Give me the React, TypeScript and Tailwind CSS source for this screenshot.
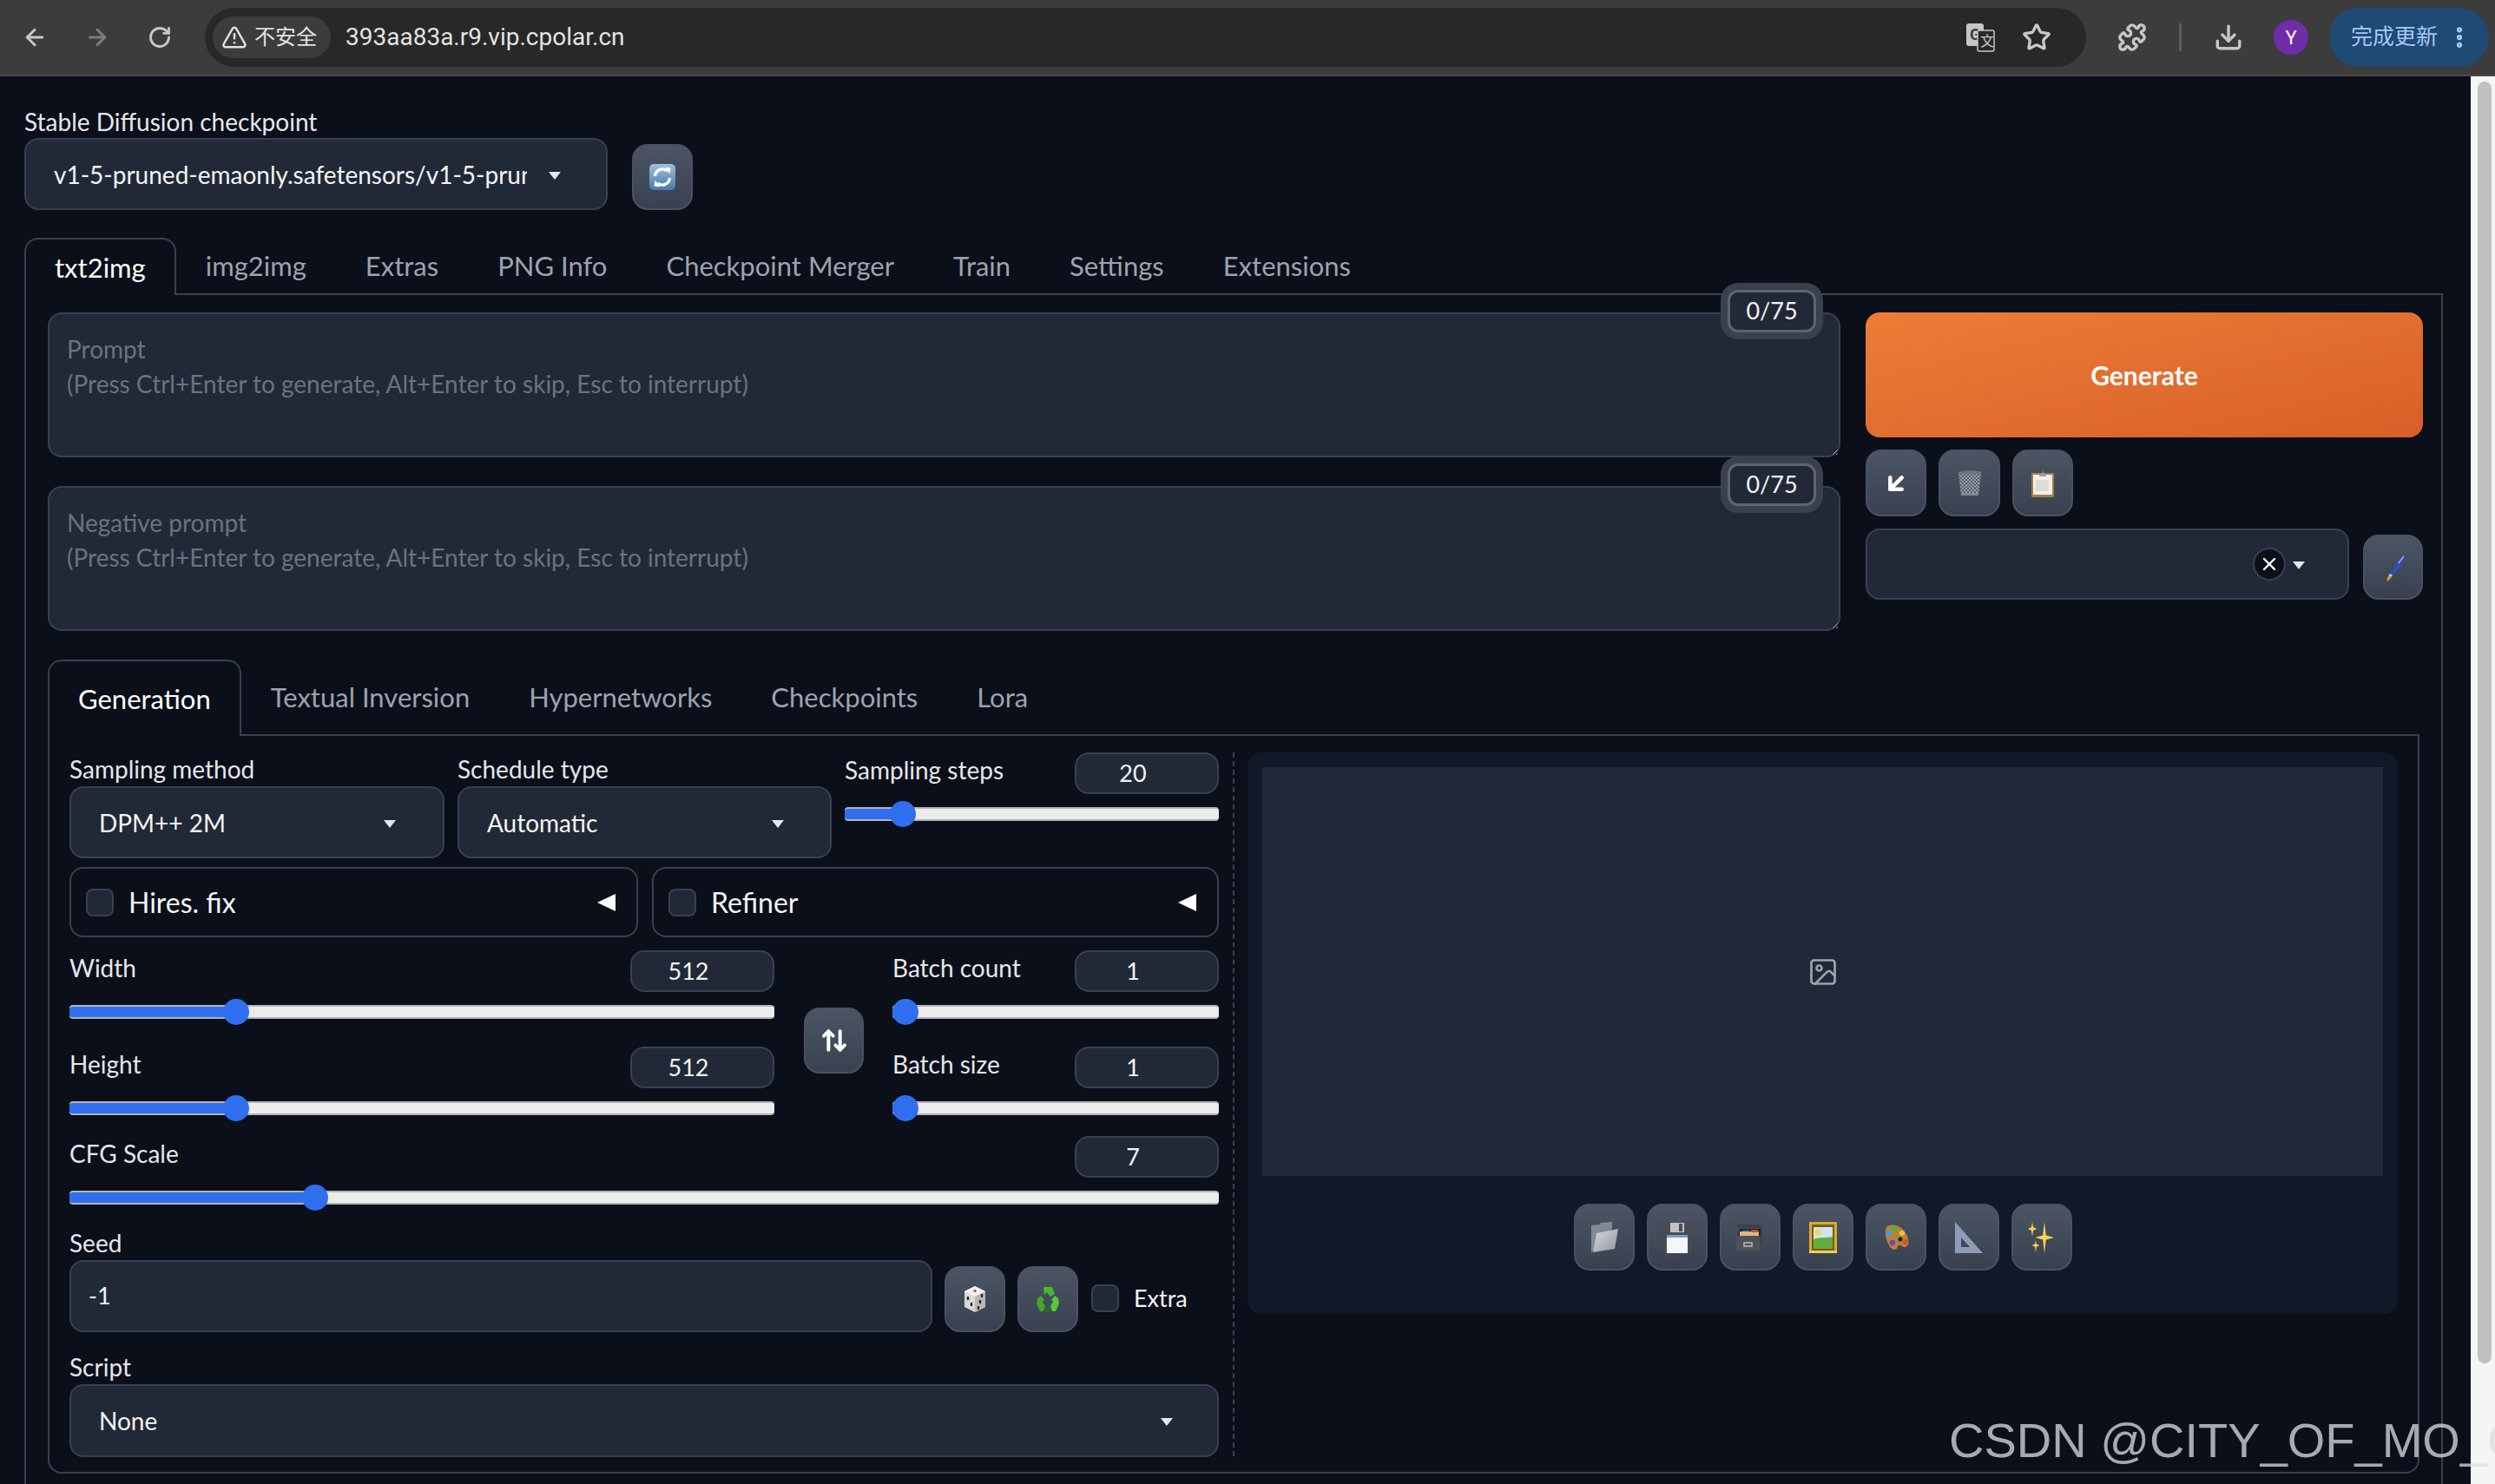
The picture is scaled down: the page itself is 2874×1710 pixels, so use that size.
import React from 'react';
import { ArrowDownLeft, ArrowLeft, ArrowRight, ArrowUpDown, Download, EllipsisVertical, ImageIcon, Puzzle, RotateCw, Star, TriangleAlert, X } from 'lucide-react';

const inputBox = 'bg-[#222936] border-2 border-[#374151] rounded-[16px]';

const RefreshEmoji = () => (
  <svg width="32" height="32" viewBox="0 0 32 32">
    <defs>
      <linearGradient id="rf" x1="0" y1="0" x2="0" y2="1">
        <stop offset="0" stopColor="#9cc0de" />
        <stop offset="1" stopColor="#4d7aa8" />
      </linearGradient>
    </defs>
    <rect x="1" y="1" width="30" height="30" rx="5" fill="url(#rf)" />
    <path d="M7.5 15a8.5 8.5 0 0 1 14-6" fill="none" stroke="#fff" strokeWidth="3.4" />
    <path d="M24.5 17a8.5 8.5 0 0 1-14 6" fill="none" stroke="#fff" strokeWidth="3.4" />
    <path d="M19 4.5l6.5 1-1 7z" fill="#fff" />
    <path d="M13 27.5l-6.5-1 1-7z" fill="#fff" />
  </svg>
);

const TrashEmoji = () => (
  <svg width="32" height="32" viewBox="0 0 32 32">
    <defs>
      <pattern id="mesh" width="4" height="4" patternUnits="userSpaceOnUse">
        <path d="M0 0l4 4M4 0L0 4" stroke="#5b6670" strokeWidth="1" />
      </pattern>
    </defs>
    <path d="M3 3h26l-3 27H6z" fill="#8e99a3" />
    <path d="M3 3h26l-3 27H6z" fill="url(#mesh)" />
    <ellipse cx="16" cy="3.5" rx="13.5" ry="2.2" fill="#6c7680" />
    <rect x="6" y="27" width="20" height="3" rx="1" fill="#808a94" />
  </svg>
);

const ClipboardEmoji = () => (
  <svg width="32" height="32" viewBox="0 0 32 32">
    <rect x="3" y="4" width="26" height="28" rx="1" fill="#a67c46" />
    <rect x="5" y="6" width="22" height="23" fill="#f1f0ea" />
    <rect x="8" y="12" width="15" height="13" fill="#dddcd6" />
    <path d="M12 5h3l1-4 1 4h3v3h-8z" fill="#9aa1a8" />
  </svg>
);

const BrushEmoji = () => (
  <svg width="32" height="32" viewBox="0 0 32 32">
    <path d="M29 1c1 3-2 9-5 13l-9 11-3-2 8-13c3-4 6-8 9-9z" fill="#2f4fc4" />
    <path d="M28 3c-2 2-4 5-6 8" stroke="#9db4f0" strokeWidth="1.5" fill="none" />
    <path d="M12 23l3 2-1.5 2-3-2z" fill="#c9ccd2" />
    <path d="M10.500 25l3 2c-1 2-3 4-5 5 0-2 1-5 2-7z" fill="#e8951f" />
  </svg>
);

const DiceEmoji = () => (
  <svg width="32" height="32" viewBox="0 0 32 32">
    <path d="M16 1l12 6v18l-12 6-12-6V7z" fill="#d9d9d6" />
    <path d="M4 7l12 6 12-6-12-6z" fill="#f0f0ee" />
    <path d="M16 13v18l12-6V7z" fill="#b9b9b5" />
    <circle cx="16" cy="6.500" r="1.600" fill="#d8302a" />
    <ellipse cx="8" cy="15" rx="1.300" ry="2.200" fill="#222" />
    <ellipse cx="12" cy="22" rx="1.300" ry="2.200" fill="#222" />
    <ellipse cx="24" cy="12" rx="1.300" ry="2.200" fill="#222" />
    <ellipse cx="22" cy="19" rx="1.300" ry="2.200" fill="#222" />
    <ellipse cx="20" cy="26" rx="1.300" ry="2.200" fill="#222" />
  </svg>
);

const RecycleEmoji = () => (
  <svg width="32" height="32" viewBox="0 0 32 32">
    <path d="M11 2h10l3 8-5 3-4-5-3 3z" fill="#48b82f" />
    <path d="M4 15l4-3 4 5-2 2 3 5-2 6H7l-4-9z" fill="#3fa82a" />
    <path d="M28 15l-4-3-4 5 2 2-3 5 2 6h4l4-9z" fill="#56c93a" />
    <path d="M13 24h6l-1 7h-4z" fill="#2d6b22" />
  </svg>
);

const FolderEmoji = () => (
  <svg width="32" height="36" viewBox="0 0 32 36">
    <defs>
      <linearGradient id="fd" x1="0" y1="0" x2="1" y2="1">
        <stop offset="0" stopColor="#d7dadd" />
        <stop offset="1" stopColor="#8d959c" />
      </linearGradient>
    </defs>
    <path d="M1 4l10-1 1-2 13-1v8L3 34l-2 1z" fill="#7f8b94" />
    <path d="M7 13l25-5-4 23L3 35z" fill="url(#fd)" />
  </svg>
);

const FloppyEmoji = () => (
  <svg width="32" height="36" viewBox="0 0 32 36">
    <rect width="32" height="36" rx="1" fill="#4a4c52" />
    <rect x="8" y="1" width="16" height="11" fill="#bfc2c6" />
    <rect x="18" y="2" width="4" height="9" fill="#4a4c52" />
    <rect x="4" y="15" width="24" height="21" fill="#f4f6f8" />
    <rect x="4" y="15" width="24" height="3" fill="#6d9fd6" />
  </svg>
);

const CardBoxEmoji = () => (
  <svg width="32" height="30" viewBox="0 0 32 30">
    <path d="M1 0h29v3l-1 20-3 1V4H3z" fill="#3e4146" />
    <path d="M4 5h24v8H2z" fill="#222" />
    <rect x="4" y="8" width="22" height="5" fill="#e9b679" />
    <rect x="17" y="6" width="8" height="3" fill="#c4503c" />
    <rect x="7" y="6" width="8" height="2" fill="#244f9c" />
    <rect y="13" width="27" height="17" rx="1" fill="#4d5055" />
    <rect x="9" y="21" width="9" height="4" fill="none" stroke="#bbb" strokeWidth="1.500" />
  </svg>
);

const PictureEmoji = () => (
  <svg width="32" height="36" viewBox="0 0 32 36">
    <rect width="32" height="36" fill="#d9aa2f" />
    <rect x="3" y="3" width="26" height="30" fill="#7a5a1c" />
    <rect x="5" y="6" width="22" height="25" fill="#cfe2ee" />
    <circle cx="10" cy="12" r="3.500" fill="#f2d84b" />
    <path d="M5 20c8-3 14-1 22-3v14H5z" fill="#63ad3f" />
    <rect y="33" width="32" height="3" fill="#f3cf4f" />
  </svg>
);

const PaletteEmoji = () => (
  <svg width="32" height="32" viewBox="0 0 32 32">
    <path d="M6 3c7-4 17 0 22 9 3 6 4 13-1 15-3 1-5-3-8-2-2 1-1 5-5 5C7 30 0 8 6 3z" fill="#b98336" />
    <circle cx="8" cy="11" r="3.300" fill="#3f9fe0" />
    <circle cx="14" cy="6" r="3" fill="#3fb83a" />
    <circle cx="23" cy="11" r="3" fill="#e8c63a" />
    <circle cx="12" cy="22" r="3.300" fill="#7b3fb5" />
    <circle cx="27" cy="21" r="3" fill="#d9503a" />
    <circle cx="21" cy="18" r="2.500" fill="#1d1d1d" />
  </svg>
);

const RulerEmoji = () => (
  <svg width="32" height="36" viewBox="0 0 32 36">
    <path fillRule="evenodd" d="M0 0l32 36H0zM7 18v11h10z" fill="#8d9db8" />
  </svg>
);

const SparklesEmoji = () => (
  <svg width="32" height="36" viewBox="0 0 32 36">
    <path d="M19 0l1.800 15.500L30 18l-9.200 2.500L19 36l-1.800-15.500L8 18l9.200-2.500z" fill="#fcd34d" />
    <path d="M5 0l1 6 4 2-4 2-1 7-1-7-4-2 4-2z" fill="#fcd34d" />
    <path d="M9 21l.9 4.500 3.600 1.500-3.600 1.500L9 35l-.9-6.500L4.500 27l3.600-1.500z" fill="#fcd34d" />
  </svg>
);

const Triangle = () => <span className="w-0 h-0 border-x-[7px] border-x-transparent border-t-[9px] border-t-[#e5e7eb] inline-block" />;

const ToolButton = ({ className, children }: { className: string; children: React.ReactNode }) => (
  <button className={`flex items-center justify-center shrink-0 rounded-[18px] border-2 border-[#4b5260] bg-gradient-to-b from-[#4b5563] to-[#394150] ${className}`}>
    {children}
  </button>
);

const Select = ({ value, className, arrowClass }: { value: string; className: string; arrowClass: string }) => (
  <div className={`relative flex items-center ${inputBox} ${className}`}>
    <span className="pl-[32px] text-[#f3f4f6] text-[28px]">{value}</span>
    <span className={`absolute top-[37px] flex ${arrowClass}`}>
      <Triangle />
    </span>
  </div>
);

const Slider = ({ pct }: { pct: number }) => (
  <div className="relative h-[30px] mt-[8px] flex items-center">
    <div className="w-full h-[16px] rounded-[4px] overflow-hidden bg-[#ececec] border-y-2 border-[#b5b5b5]">
      <div className="h-full bg-[#2f6fef]" style={{ width: `${pct}%` }} />
    </div>
    <span className="absolute top-0 w-[30px] h-[30px] rounded-full bg-[#2f6fef] -translate-x-1/2" style={{ left: `${pct}%` }} />
  </div>
);

const SliderBlock = ({ label, value, pct, className }: { label: string; value: string; pct: number; className?: string }) => (
  <div className={className}>
    <div className="flex justify-between h-[48px]">
      <span className="h-[40px] leading-[40px] text-[#e5e7eb] text-[28px]">{label}</span>
      <div className={`w-[166px] h-[48px] flex items-center justify-center pr-[32px] text-[#f3f4f6] text-[27px] ${inputBox}`}>{value}</div>
    </div>
    <Slider pct={pct} />
  </div>
);

const Accordion = ({ label, className }: { label: string; className: string }) => (
  <div className={`flex items-center h-[81px] border-2 border-[#374151] rounded-[16px] pl-[17px] pr-[24px] ${className}`}>
    <span className={`w-[32px] h-[32px] rounded-[8px] ${inputBox.replace('rounded-[16px]', '')}`} />
    <span className="ml-[17px] text-[32px] text-[#f3f4f6] flex-1">{label}</span>
    <span className="w-0 h-0 border-y-[10px] border-y-transparent border-r-[21px] border-r-white" />
  </div>
);

const Label = ({ children }: { children: React.ReactNode }) => (
  <div className="h-[39px] leading-[39px] text-[#e5e7eb] text-[28px]">{children}</div>
);

const PromptBox = ({ placeholder, className }: { placeholder: string; className?: string }) => (
  <div className={`relative h-[167px] ${className ?? ''}`}>
    <textarea
      readOnly
      placeholder={placeholder}
      className="block w-full h-full resize-y pl-[20px] pt-[20px] leading-[40px] text-[28px] rounded-[16px] bg-[#222936] border-2 border-[#374151] placeholder:text-[#6b7280] [color-scheme:dark] outline-none"
    />
    <div className="absolute -top-[26px] right-[28px] w-[102px] h-[49px] flex items-center justify-center rounded-[12px] border-[3px] border-[#5f646c] bg-[#222936] shadow-[0_0_0_8px_#3a404c] text-[#f3f4f6] text-[27px]">
      0/75
    </div>
  </div>
);

const BrowserBar = () => (
  <div className="relative flex items-center h-[88px] bg-[#3c3c3c] border-b-2 border-[#4a4a4a] text-[#c7c7c7] [font-family:Roboto,'Noto_Sans_CJK_SC',sans-serif] shrink-0">
    <div className="flex items-center pl-[4px]">
      <span className="w-[72px] flex justify-center"><ArrowLeft size={30} strokeWidth={2.4} /></span>
      <span className="w-[72px] flex justify-center text-[#7d7d7d]"><ArrowRight size={30} strokeWidth={2.4} /></span>
      <span className="w-[72px] flex justify-center"><RotateCw size={28} strokeWidth={2.4} /></span>
    </div>
    <div className="ml-[16px] w-[2167px] h-[68px] rounded-full bg-[#282828] flex items-center pl-[9px] pr-[40px]">
      <div className="flex items-center gap-[8px] h-[48px] w-[136px] pl-[10px] rounded-full bg-[#3c3c3c] text-[#e3e3e3] text-[24px]">
        <TriangleAlert size={30} strokeWidth={2} />
        <span>不安全</span>
      </div>
      <span className="ml-[17px] text-[28px] text-[#e3e3e3] flex-1">393aa83a.r9.vip.cpolar.cn</span>
      <svg width="34" height="34" viewBox="0 0 34 34" className="mr-[31px]">
        <rect x="1" y="1" width="20" height="26" rx="3" fill="#c7c7c7" />
        <text x="5" y="20" fontSize="18" fontWeight="700" fill="#3a3a3a" fontFamily="Roboto">G</text>
        <rect x="14" y="9" width="19" height="24" rx="2" fill="#282828" stroke="#c7c7c7" strokeWidth="1.500" />
        <text x="17" y="27" fontSize="16" fill="#c7c7c7" fontFamily="'Noto Sans CJK SC'">文</text>
      </svg>
      <Star size={34} strokeWidth={2.4} />
    </div>
    <span className="ml-[36px]"><Puzzle size={34} strokeWidth={2.4} /></span>
    <span className="ml-[37px] w-[3px] h-[32px] bg-[#5c5c5c]" />
    <span className="ml-[37px]"><Download size={34} strokeWidth={2.4} /></span>
    <span className="ml-[35px] w-[40px] h-[40px] rounded-full bg-[#6f2da8] text-white text-[22px] flex items-center justify-center">Y</span>
    <div className="ml-[24px] w-[184px] h-[68px] rounded-full bg-[#1e4a73] text-[#a8c7fa] text-[25px] flex items-center pl-[25px]">
      完成更新
      <EllipsisVertical size={30} strokeWidth={3} className="ml-[10px]" />
    </div>
  </div>
);

const topTabs = ['img2img', 'Extras', 'PNG Info', 'Checkpoint Merger', 'Train', 'Settings', 'Extensions'];
const innerTabs = ['Textual Inversion', 'Hypernetworks', 'Checkpoints', 'Lora'];

const Tabs = ({ active, tabs, height }: { active: string; tabs: string[]; height: string }) => (
  <div className={`flex items-stretch text-[31px] ${height}`}>
    <div className="relative z-10 -mb-[2px] px-[33px] flex items-center text-white bg-[#0b0f19] border-2 border-b-0 border-[#374151] rounded-t-[16px]">
      {active}
    </div>
    {tabs.map((t) => (
      <div key={t} className="px-[34px] flex items-center text-[#9ca3af]">{t}</div>
    ))}
  </div>
);

const App = () => {
  return (
    <div className="relative w-[2874px] h-[1710px] overflow-hidden flex flex-col bg-[#0b0f19] [font-family:Lato,'Noto_Sans_CJK_SC',sans-serif]">
      <BrowserBar />
      <div className="flex flex-1 min-h-0">
        <main className="flex-1 min-w-0 pl-[28px] pr-[32px] pt-[34px]">
          <div className="h-[37px] leading-[37px] text-[#e5e7eb] text-[28px]">Stable Diffusion checkpoint</div>
          <div className="flex gap-[28px]">
            <div className={`relative w-[672px] h-[83px] flex items-center pl-[32px] ${inputBox}`}>
              <span className="w-[545px] whitespace-nowrap overflow-hidden text-[#f3f4f6] text-[28px]">v1-5-pruned-emaonly.safetensors/v1-5-pruned-emaonly.safetensors</span>
              <span className="absolute left-[602px] top-[37px] flex"><Triangle /></span>
            </div>
            <ToolButton className="self-end w-[70px] h-[76px]"><RefreshEmoji /></ToolButton>
          </div>

          <div className="mt-[32px]">
            <Tabs active="txt2img" tabs={topTabs} height="h-[64px]" />
          </div>
          <div className="h-[1400px] border-2 border-[#374151] pl-[25px] pr-[21px] pt-[20px]">
            <div className="flex gap-[29px]">
              <div className="w-[2065px]">
                <PromptBox placeholder={'Prompt\n(Press Ctrl+Enter to generate, Alt+Enter to skip, Esc to interrupt)'} />
                <PromptBox className="mt-[33px]" placeholder={'Negative prompt\n(Press Ctrl+Enter to generate, Alt+Enter to skip, Esc to interrupt)'} />
              </div>
              <div className="w-[642px]">
                <button className="w-full h-[144px] rounded-[16px] bg-gradient-to-br from-[#ec7d36] to-[#d85f28] text-white text-[30px] font-bold">Generate</button>
                <div className="mt-[14px] flex gap-[14px]">
                  <ToolButton className="w-[70px] h-[77px]"><ArrowDownLeft size={32} strokeWidth={3.4} color="#fff" /></ToolButton>
                  <ToolButton className="w-[71px] h-[77px]"><TrashEmoji /></ToolButton>
                  <ToolButton className="w-[70px] h-[77px]"><ClipboardEmoji /></ToolButton>
                </div>
                <div className="mt-[14px] flex gap-[16px]">
                  <div className={`relative w-[557px] h-[82px] ${inputBox}`}>
                    <span className="absolute left-[444px] top-[20px] w-[38px] h-[38px] rounded-full bg-[#0b0f19] border-2 border-[#374151] flex items-center justify-center">
                      <X size={24} strokeWidth={2.4} color="#fff" />
                    </span>
                    <span className="absolute left-[490px] top-[36px] flex"><Triangle /></span>
                  </div>
                  <ToolButton className="self-end w-[69px] h-[75px]"><BrushEmoji /></ToolButton>
                </div>
              </div>
            </div>

            <div className="mt-[33px]">
              <Tabs active="Generation" tabs={innerTabs} height="h-[86px]" />
            </div>
            <div className="w-[2732px] h-[852px] border-2 border-[#374151] rounded-b-[16px] pl-[23px] pt-[19px] flex">
              <div className="w-[1324px] h-[811px] shrink-0">
                <div className="flex gap-[15px]">
                  <div className="w-[432px]">
                    <Label>Sampling method</Label>
                    <Select value="DPM++ 2M" className="h-[83px]" arrowClass="left-[360px]" />
                  </div>
                  <div className="w-[431px]">
                    <Label>Schedule type</Label>
                    <Select value="Automatic" className="h-[83px]" arrowClass="left-[360px]" />
                  </div>
                  <SliderBlock className="w-[431px]" label="Sampling steps" value="20" pct={15.5} />
                </div>

                <div className="mt-[10px] flex gap-[16px]">
                  <Accordion label="Hires. fix" className="w-[655px]" />
                  <Accordion label="Refiner" className="w-[653px]" />
                </div>

                <div className="mt-[15px] flex">
                  <div className="w-[812px]">
                    <SliderBlock label="Width" value="512" pct={23.6} />
                    <SliderBlock className="mt-[25px]" label="Height" value="512" pct={23.6} />
                  </div>
                  <ToolButton className="ml-[34px] mt-[66px] w-[69px] h-[76px]"><ArrowUpDown size={32} strokeWidth={3} color="#fff" /></ToolButton>
                  <div className="ml-[33px] w-[376px]">
                    <SliderBlock label="Batch count" value="1" pct={4} />
                    <SliderBlock className="mt-[25px]" label="Batch size" value="1" pct={4} />
                  </div>
                </div>

                <SliderBlock className="mt-[17px]" label="CFG Scale" value="7" pct={21.4} />

                <div className="mt-[18px]">
                  <Label>Seed</Label>
                  <div className="flex">
                    <div className={`w-[994px] h-[83px] flex items-center pl-[20px] text-[#f3f4f6] text-[27px] ${inputBox}`}>-1</div>
                    <ToolButton className="ml-[14px] self-end w-[70px] h-[76px]"><DiceEmoji /></ToolButton>
                    <ToolButton className="ml-[14px] self-end w-[70px] h-[76px]"><RecycleEmoji /></ToolButton>
                    <span className="ml-[15px] mt-[28px] w-[32px] h-[32px] rounded-[8px] bg-[#222936] border-2 border-[#374151]" />
                    <span className="ml-[17px] mt-[24px] text-[#f3f4f6] text-[27px]">Extra</span>
                  </div>
                </div>

                <div className="mt-[21px]">
                  <Label>Script</Label>
                  <Select value="None" className="h-[84px]" arrowClass="left-[1255px]" />
                </div>
              </div>

              <div className="ml-[16px] h-[811px] border-l-2 border-dashed border-[#374151]" />

              <div className="ml-[15px] w-[1325px] h-[647px] rounded-[16px] bg-[#111827] p-[17px]">
                <div className="h-[471px] bg-[#1f2937] flex items-center justify-center text-[#9ca3af]">
                  <ImageIcon size={36} strokeWidth={1.8} />
                </div>
                <div className="mt-[32px] flex justify-center gap-[14px]">
                  <ToolButton className="w-[70px] h-[77px]"><FolderEmoji /></ToolButton>
                  <ToolButton className="w-[70px] h-[77px]"><FloppyEmoji /></ToolButton>
                  <ToolButton className="w-[70px] h-[77px]"><CardBoxEmoji /></ToolButton>
                  <ToolButton className="w-[70px] h-[77px]"><PictureEmoji /></ToolButton>
                  <ToolButton className="w-[70px] h-[77px]"><PaletteEmoji /></ToolButton>
                  <ToolButton className="w-[70px] h-[77px]"><RulerEmoji /></ToolButton>
                  <ToolButton className="w-[70px] h-[77px]"><SparklesEmoji /></ToolButton>
                </div>
              </div>
            </div>
          </div>
        </main>
        <div className="w-[28px] shrink-0 bg-[#f5f5f5] pl-[8px] pr-[4px] pt-[6px]">
          <div className="h-[1477px] rounded-full bg-[#c1c1c1]" />
        </div>
      </div>

      <div className="absolute left-[2245px] top-[1628px] whitespace-nowrap text-[56px] leading-[64px] text-[rgba(219,219,219,0.76)] [font-family:'Liberation_Sans',sans-serif]">
        CSDN @CITY_OF_MO_GY
      </div>
    </div>
  );
};

export default App;
